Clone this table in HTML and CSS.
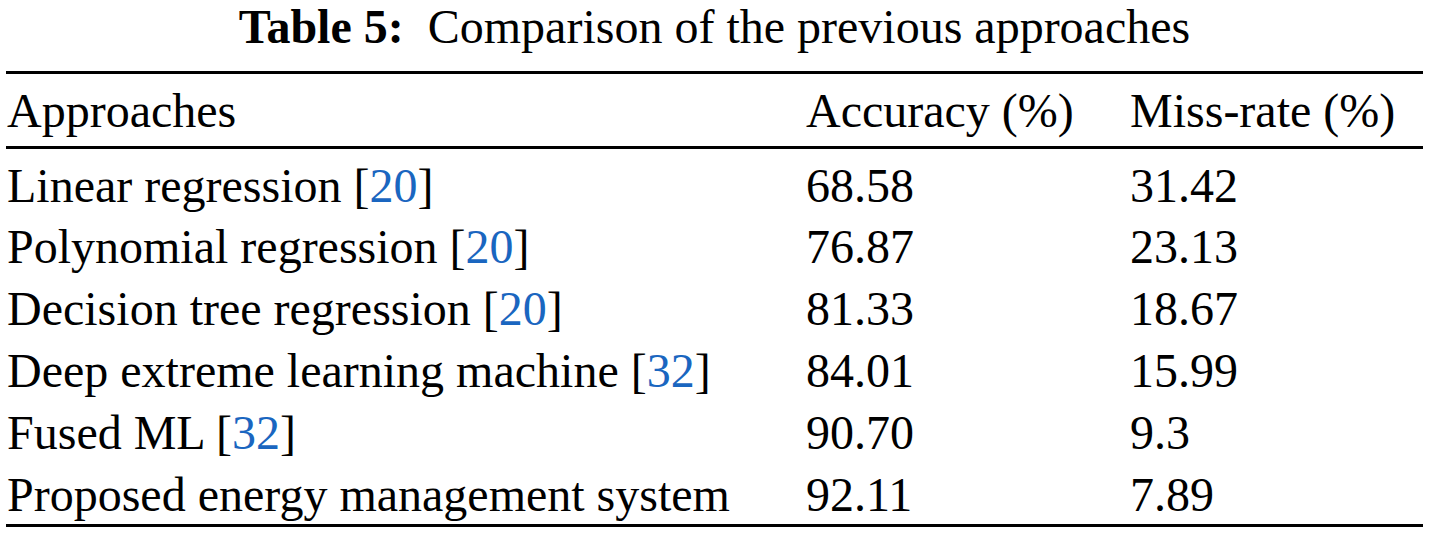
FILE: index.html
```html
<!DOCTYPE html>
<html lang="en">
<head>
    <meta charset="UTF-8">
    <title>Table 5: Comparison of the previous approaches</title>
    <link rel="stylesheet" href="styles.css">
</head>
<body>

    <div class="table-wrap">
        <div class="caption"><b>Table 5:</b>&nbsp; Comparison of the previous approaches</div>

        <table class="results">
            <thead>
                <tr>
                    <th class="col-name">Approaches</th>
                    <th class="col-acc">Accuracy (%)</th>
                    <th class="col-miss">Miss-rate (%)</th>
                </tr>
            </thead>
            <tbody>
                <tr>
                    <td>Linear regression [<a href="#ref20">20</a>]</td>
                    <td>68.58</td>
                    <td>31.42</td>
                </tr>
                <tr>
                    <td>Polynomial regression [<a href="#ref20">20</a>]</td>
                    <td>76.87</td>
                    <td>23.13</td>
                </tr>
                <tr>
                    <td>Decision tree regression [<a href="#ref20">20</a>]</td>
                    <td>81.33</td>
                    <td>18.67</td>
                </tr>
                <tr>
                    <td>Deep extreme learning machine [<a href="#ref32">32</a>]</td>
                    <td>84.01</td>
                    <td>15.99</td>
                </tr>
                <tr>
                    <td>Fused ML [<a href="#ref32">32</a>]</td>
                    <td>90.70</td>
                    <td>9.3</td>
                </tr>
                <tr class="last">
                    <td>Proposed energy management system</td>
                    <td>92.11</td>
                    <td>7.89</td>
                </tr>
            </tbody>
        </table>
    </div>

</body>
</html>
```

FILE: styles.css
```css
* {
    margin: 0;
    padding: 0;
    box-sizing: border-box;
}

body {
    background: #ffffff;
    color: #000000;
    font-family: "Liberation Serif", "Times New Roman", serif;
}

.table-wrap {
    width: 1417px;
    margin-left: 6px;
}

.caption {
    text-align: center;
    font-size: 48px;
    line-height: 48px;
    height: 71px;
    padding-top: 3px;
}

.results {
    width: 100%;
    border-collapse: collapse;
    font-size: 48px;
    line-height: 48px;
    border-top: 3px solid #000;
    border-bottom: 3px solid #000;
}

.results th {
    font-weight: normal;
    text-align: left;
    height: 75px;
    padding: 13px 0 0 1px;
    border-bottom: 3px solid #000;
    vertical-align: top;
}

.results td {
    height: 62px;
    padding: 13px 0 0 1px;
    vertical-align: top;
}

.results tr.last td {
    height: 67px;
}

.col-name {
    width: 799px;
}

.col-acc {
    width: 324px;
}

.results a {
    color: #1a66c0;
    text-decoration: none;
}
```
